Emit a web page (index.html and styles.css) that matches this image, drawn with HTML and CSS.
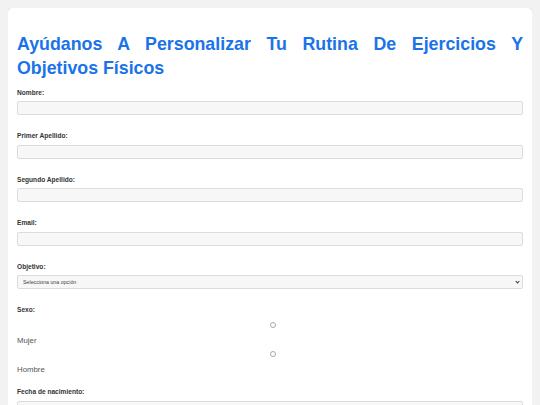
FILE: index.html
```html
<!DOCTYPE html>
<html lang="es">
<head>
    <meta charset="UTF-8">
    <meta name="viewport" content="width=device-width, initial-scale=1.0">
    <title>Formulario de rutina</title>
    <link rel="stylesheet" href="styles.css">
</head>
<body>
    <div class="container">
        <h1>Ayúdanos A Personalizar Tu Rutina De Ejercicios Y Objetivos Físicos</h1>

        <form>
            <div class="field">
                <label class="field-label" for="nombre">Nombre:</label>
                <input type="text" id="nombre" name="nombre">
            </div>

            <div class="field">
                <label class="field-label" for="apellido1">Primer Apellido:</label>
                <input type="text" id="apellido1" name="apellido1">
            </div>

            <div class="field">
                <label class="field-label" for="apellido2">Segundo Apellido:</label>
                <input type="text" id="apellido2" name="apellido2">
            </div>

            <div class="field">
                <label class="field-label" for="email">Email:</label>
                <input type="email" id="email" name="email">
            </div>

            <div class="field">
                <label class="field-label" for="objetivo">Objetivo:</label>
                <div class="select-wrap">
                    <select id="objetivo" name="objetivo">
                        <option value="">Selecciona una opción</option>
                        <option value="perder">Perder peso</option>
                        <option value="ganar">Ganar masa muscular</option>
                        <option value="mantener">Mantenerme en forma</option>
                    </select>
                </div>
            </div>

            <div class="field field-radio">
                <label class="field-label">Sexo:</label>
                <div class="radio-group">
                    <input type="radio" id="mujer" name="sexo" value="mujer">
                    <label class="radio-label" for="mujer">Mujer</label>
                    <input type="radio" id="hombre" name="sexo" value="hombre">
                    <label class="radio-label" for="hombre">Hombre</label>
                </div>
            </div>

            <div class="field">
                <label class="field-label" for="nacimiento">Fecha de nacimiento:</label>
                <input type="text" id="nacimiento" name="nacimiento">
            </div>
        </form>
    </div>
</body>
</html>
```

FILE: styles.css
```css
body {
    font-family: 'Liberation Sans', Arial, sans-serif;
    margin: 8px;
    background-color: #f2f2f2;
    color: #333;
}

.container {
    background-color: #fff;
    padding: 9px;
    border-radius: 5px;
    box-shadow: 0 0 5px rgba(0, 0, 0, 0.1);
}

h1 {
    font-size: 17.8px;
    line-height: 24px;
    font-weight: bold;
    color: #1a73e8;
    text-align: justify;
    margin: 15px 0 7.5px;
}

.field {
    margin-bottom: 16px;
}

.field-label {
    display: block;
    font-size: 6.6px;
    line-height: 9px;
    font-weight: bold;
    color: #333;
    margin-bottom: 4.5px;
}

.field input[type="text"],
.field input[type="email"],
.field select {
    display: block;
    width: 100%;
    height: 14px;
    padding: 0 5px;
    font-family: 'Liberation Sans', Arial, sans-serif;
    font-size: 5.3px;
    color: #444;
    background-color: #f7f7f7;
    border: 1px solid #dcdcdc;
    border-radius: 2px;
    box-sizing: border-box; /* para que el padding no cambie el ancho */
}

.select-wrap {
    position: relative;
}

.field select {
    appearance: none;
    -webkit-appearance: none;
    padding: 0 10px 0 5px;
}

/* flechita del select */
.select-wrap::after {
    content: "";
    position: absolute;
    right: 4px;
    top: 5px;
    width: 2px;
    height: 2px;
    border-right: 1px solid #333;
    border-bottom: 1px solid #333;
    transform: rotate(45deg);
    pointer-events: none;
}

/* grupo de sexo */
.field-radio {
    margin-bottom: 12px;
}

.radio-group {
    padding-top: 3px;
}

.radio-group input[type="radio"] {
    appearance: none;
    -webkit-appearance: none;
    display: block;
    width: 6px;
    height: 6px;
    margin: 0 0 7.5px calc(50% - 0.5px);
    border: 1px solid #a8a8a8;
    border-radius: 50%;
    background-color: #fff;
    box-sizing: border-box;
}

.radio-label {
    display: block;
    font-size: 7.8px;
    line-height: 11px;
    color: #555;
    margin-bottom: 4.5px;
}
```
